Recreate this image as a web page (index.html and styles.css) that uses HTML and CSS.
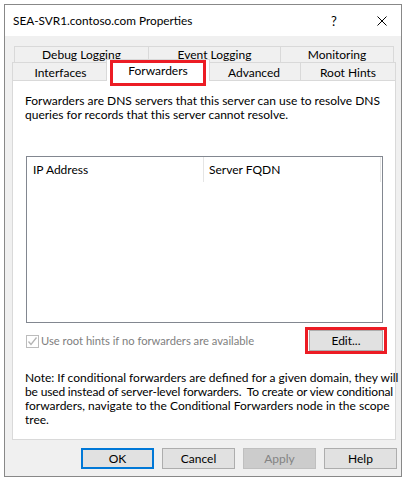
FILE: index.html
```html
<!DOCTYPE html>
<html lang="en">
<head>
<meta charset="utf-8">
<title>SEA-SVR1.contoso.com Properties</title>
<link rel="stylesheet" href="styles.css">
</head>
<body>
<div class="dialog">
  <div class="titlebar">
    <span class="title">SEA-SVR1.contoso.com Properties</span>
    <span class="cap help">?</span>
    <span class="cap close"><svg width="10" height="10" viewBox="0 0 10 10"><path d="M0.5 0.5 L9.5 9.5 M9.5 0.5 L0.5 9.5" stroke="#000" stroke-width="1" fill="none"/></svg></span>
  </div>
  <div class="content">
    <div class="tabs">
      <div class="tabrow back">
        <div class="tab t-debug">Debug Logging</div>
        <div class="tab t-event">Event Logging</div>
        <div class="tab t-mon">Monitoring</div>
      </div>
      <div class="tabrow front">
        <div class="tab t-if">Interfaces</div>
        <div class="tab t-fwd sel">Forwarders</div>
        <div class="tab t-adv">Advanced</div>
        <div class="tab t-root">Root Hints</div>
      </div>
    </div>
    <div class="panel">
      <p class="intro">Forwarders are DNS servers that this server can use to resolve DNS<br>queries for records that this server cannot resolve.</p>
      <div class="listbox">
        <div class="listhead">
          <div class="col">IP Address</div>
          <div class="col">Server FQDN</div>
        </div>
      </div>
      <div class="optrow">
        <label class="check">
          <span class="box"><svg width="11" height="11" viewBox="0 0 11 11"><path d="M1.5 5.5 L4 8.5 L9.5 1.5" stroke="#b4b4b4" stroke-width="1.3" fill="none"/></svg></span>
          <span class="checklabel">Use root hints if no forwarders are available</span>
        </label>
        <button class="btn edit">Edit...</button>
      </div>
      <p class="note">Note: If conditional forwarders are defined for a given domain, they will<br><span class="tight">be used instead of server-level forwarders.&nbsp; To create or view conditional</span><br>forwarders, navigate to the Conditional Forwarders node in the scope<br>tree.</p>
    </div>
    <div class="buttons">
      <button class="btn default">OK</button>
      <button class="btn">Cancel</button>
      <button class="btn disabled">Apply</button>
      <button class="btn">Help</button>
    </div>
  </div>
</div>
</body>
</html>
```
FILE: styles.css
```css
*, *::before, *::after { box-sizing: border-box; }

body {
  margin: 0;
  padding: 4px;
  background: #fff;
  font-family: "Lato", "Noto Sans", sans-serif;
  font-size: 12px;
  color: #000;
}

.dialog {
  width: 398px;
  height: 473px;
  border: 1px solid #888;
  display: flex;
  flex-direction: column;
  background: #f0f0f0;
}

.titlebar {
  height: 31px;
  background: #fff;
  display: flex;
  align-items: center;
  padding: 0 14px 0 8px;
}

.title { flex: 1; font-size: 11.8px; }

.cap { display: flex; align-items: center; justify-content: center; }
.help { width: 16px; margin-right: 35px; font-size: 13px; }
.close { width: 10px; height: 10px; }
.close svg { display: block; }

.content {
  flex: 1;
  display: flex;
  flex-direction: column;
  padding-top: 10px;
}

.tabs { display: flex; flex-direction: column; }

.tabrow { display: flex; }
.tabrow.back { height: 16px; margin-left: 9px; }
.tabrow.front { height: 18px; margin-left: 7px; align-items: flex-end; }

.tab {
  border: 1px solid #d9d9d9;
  border-bottom: none;
  background: #f0f0f0;
  text-align: center;
  white-space: nowrap;
}
.tabrow.back .tab { height: 16px; line-height: 14px; padding-top: 1px; }
.tabrow.front .tab { height: 18px; line-height: 17px; padding-top: 1px; }

.t-debug { width: 135px; }
.t-event { width: 133px; margin-left: -1px; }
.t-mon { width: 114px; margin-left: -1px; }

.t-if { width: 97px; }
.t-fwd { width: 104px; }
.t-adv { width: 94px; }
.t-root { width: 96px; margin-left: -1px; }

.tabrow.front .tab.sel {
  position: relative;
  z-index: 2;
  height: 22px;
  margin: 0 -3px -1px -3px;
  background: #fff;
  padding-top: 0;
  line-height: 21px;
}

.tab.sel::after {
  content: "";
  position: absolute;
  left: 3px;
  top: 0;
  width: 96px;
  height: 26px;
  border: 3px solid #ec1c24;
}

.panel {
  margin-left: 7px;
  width: 384px;
  height: 360px;
  border: 1px solid #d9d9d9;
  background: #fff;
  padding: 0 12px 0 12px;
}

.intro, .note {
  margin: 0;
  line-height: 13.7px;
  white-space: nowrap;
}
.intro { margin-top: 13px; }
.tight { letter-spacing: -0.16px; }

.listbox {
  margin: 35px 0 0 1px;
  width: 357px;
  height: 167px;
  border: 1px solid #828790;
  background: #fff;
}

.listhead { display: flex; height: 25px; }
.listhead .col {
  width: 177px;
  border-right: 1px solid #e5e5e5;
  padding: 5px 0 0 6px;
  line-height: 15px;
}
.listhead .col + .col { padding-left: 5px; }

.optrow {
  margin: 7px 0 0 1px;
  width: 357px;
  display: flex;
  align-items: center;
  justify-content: space-between;
}

.check { display: flex; align-items: center; gap: 2px; }
.box {
  width: 13px;
  height: 13px;
  border: 1px solid #bcbcbc;
  background: #fff;
  display: flex;
  align-items: center;
  justify-content: center;
  margin-top: 1px;
}
.box svg { display: block; }
.checklabel { color: #808080; font-size: 11.2px; }

.btn {
  font-family: inherit;
  font-size: 12px;
  width: 73px;
  height: 21px;
  border: 1px solid #adadad;
  background: #e1e1e1;
  color: #000;
  padding: 0;
  margin: 0;
}

.btn.edit { position: relative; width: 74px; }
.btn.edit::after {
  content: "";
  position: absolute;
  left: -5px;
  top: -4px;
  width: 82px;
  height: 27px;
  border: 3px solid #ec1c24;
}

.note { margin-top: 20px; }

.buttons {
  display: flex;
  justify-content: flex-end;
  gap: 8px;
  padding-right: 4px;
  margin-top: 8px;
}

.btn.default { border: 2px solid #0078d7; }
.btn.disabled { background: #cccccc; border-color: #bfbfbf; color: #838383; }
```
